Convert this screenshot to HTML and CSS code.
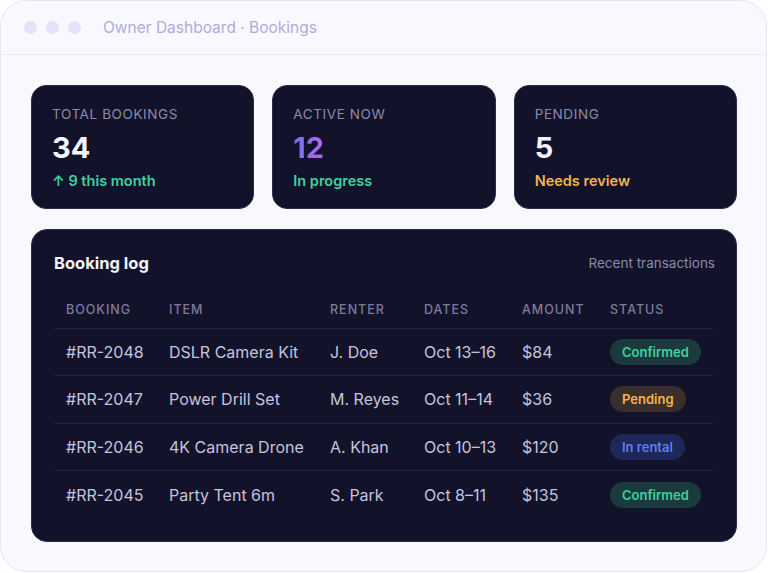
FILE: index.html
```html
<!DOCTYPE html>
<html lang="en">
<head>
    <meta charset="UTF-8">
    <meta name="viewport" content="width=device-width, initial-scale=1.0">
    <title>Owner Dashboard - Bookings</title>
    <link rel="stylesheet" href="styles.css">
</head>
<body>
    <div class="window">
        <div class="titlebar">
            <span class="dot"></span>
            <span class="dot"></span>
            <span class="dot"></span>
            <span class="title">Owner Dashboard · Bookings</span>
        </div>
        <main class="content">
            <section class="stats">
                <div class="stat-card">
                    <p class="stat-label">Total bookings</p>
                    <p class="stat-value">34</p>
                    <p class="stat-note green">↑ 9 this month</p>
                </div>
                <div class="stat-card">
                    <p class="stat-label">Active now</p>
                    <p class="stat-value gradient">12</p>
                    <p class="stat-note green">In progress</p>
                </div>
                <div class="stat-card">
                    <p class="stat-label">Pending</p>
                    <p class="stat-value">5</p>
                    <p class="stat-note amber">Needs review</p>
                </div>
            </section>
            <section class="log">
                <div class="log-head">
                    <h2>Booking log</h2>
                    <span class="log-sub">Recent transactions</span>
                </div>
                <table>
                    <colgroup>
                        <col class="c-id">
                        <col class="c-item">
                        <col class="c-renter">
                        <col class="c-dates">
                        <col class="c-amount">
                        <col class="c-status">
                    </colgroup>
                    <thead>
                        <tr>
                            <th>Booking</th>
                            <th>Item</th>
                            <th>Renter</th>
                            <th>Dates</th>
                            <th>Amount</th>
                            <th>Status</th>
                        </tr>
                    </thead>
                    <tbody>
                        <tr>
                            <td>#RR-2048</td>
                            <td>DSLR Camera Kit</td>
                            <td>J. Doe</td>
                            <td>Oct 13–16</td>
                            <td>$84</td>
                            <td><span class="badge confirmed">Confirmed</span></td>
                        </tr>
                        <tr>
                            <td>#RR-2047</td>
                            <td>Power Drill Set</td>
                            <td>M. Reyes</td>
                            <td>Oct 11–14</td>
                            <td>$36</td>
                            <td><span class="badge pending">Pending</span></td>
                        </tr>
                        <tr>
                            <td>#RR-2046</td>
                            <td>4K Camera Drone</td>
                            <td>A. Khan</td>
                            <td>Oct 10–13</td>
                            <td>$120</td>
                            <td><span class="badge rental">In rental</span></td>
                        </tr>
                        <tr>
                            <td>#RR-2045</td>
                            <td>Party Tent 6m</td>
                            <td>S. Park</td>
                            <td>Oct 8–11</td>
                            <td>$135</td>
                            <td><span class="badge confirmed">Confirmed</span></td>
                        </tr>
                    </tbody>
                </table>
            </section>
        </main>
    </div>
</body>
</html>
```

FILE: styles.css
```css
* {
    margin: 0;
    padding: 0;
    box-sizing: border-box;
    font-family: Inter, "Noto Sans", sans-serif;
}

body {
    background-color: #fff;
}

.window {
    width: 767px;
    height: 572px;
    background-color: #f9f8ff;
    border: 1px solid #e6e4fb;
    border-radius: 26px;
    overflow: hidden;
}

/* top bar with the three window dots */
.titlebar {
    height: 54px;
    display: flex;
    align-items: center;
    gap: 9px;
    padding-left: 23px;
    border-bottom: 1px solid #eceafa;
}

.dot {
    width: 13px;
    height: 13px;
    border-radius: 50%;
    background-color: #e4e2f8;
}

.title {
    margin-left: 13px;
    font-size: 15.5px;
    color: #aeabdc;
}

.content {
    padding: 30px 29px 0 30px;
}

.stats {
    display: grid;
    grid-template-columns: repeat(3, 1fr);
    gap: 18px;
}

.stat-card {
    height: 124px;
    background-color: #13122b;
    border: 1px solid #2c2a4e;
    border-radius: 15px;
    padding: 19px 20px;
}

.stat-label {
    font-size: 13.5px;
    letter-spacing: 0.6px;
    text-transform: uppercase;
    color: #8c8aa8;
    line-height: 18px;
}

.stat-value {
    margin-top: 7px;
    font-size: 29px;
    font-weight: 700;
    color: #f4f3ff;
    line-height: 36px;
}

.stat-value.gradient {
    background: linear-gradient(90deg, #6f72f4, #b466f0);
    -webkit-background-clip: text;
    background-clip: text;
    color: transparent;
    display: inline-block;
}

.stat-note {
    margin-top: 6px;
    font-size: 14.5px;
    font-weight: 600;
    line-height: 18px;
}

.green {
    color: #3ed2a0;
}

.amber {
    color: #f2b546;
}

/* booking log panel */
.log {
    margin-top: 20px;
    height: 313px;
    background-color: #13122b;
    border: 1px solid #2c2a4e;
    border-radius: 16px;
    padding: 23px 21px 0 22px;
}

.log-head {
    display: flex;
    justify-content: space-between;
    align-items: center;
    height: 20px;
}

.log-head h2 {
    font-size: 16.5px;
    font-weight: 700;
    color: #f4f3ff;
}

.log-sub {
    font-size: 13.5px;
    color: #8c8aa8;
}

table {
    width: calc(100% - 2px);
    margin-top: 18px;
    border-collapse: collapse;
}

.c-id { width: 103px; }
.c-item { width: 161px; }
.c-renter { width: 94px; }
.c-dates { width: 98px; }
.c-amount { width: 88px; }

th {
    height: 37px;
    padding-left: 12px;
    text-align: left;
    font-size: 12.5px;
    font-weight: 500;
    letter-spacing: 1px;
    text-transform: uppercase;
    color: #7d7b9a;
    border-bottom: 1px solid #23223f;
}

td {
    height: 47.5px;
    padding-left: 12px;
    font-size: 16px;
    color: #c6c4dc;
    border-bottom: 1px solid #23223f;
    white-space: nowrap;
}

tbody tr:last-child td {
    border-bottom: none;
}

.badge {
    display: inline-block;
    padding: 5px 12px;
    border-radius: 13px;
    font-size: 13px;
    font-weight: 600;
    line-height: 16px;
}

.badge.confirmed {
    background-color: #1b3a3d;
    color: #3ed2a0;
}

.badge.pending {
    background-color: #3a2e2c;
    color: #f2b546;
}

.badge.rental {
    background-color: #1d275a;
    color: #5c7df2;
}
```
